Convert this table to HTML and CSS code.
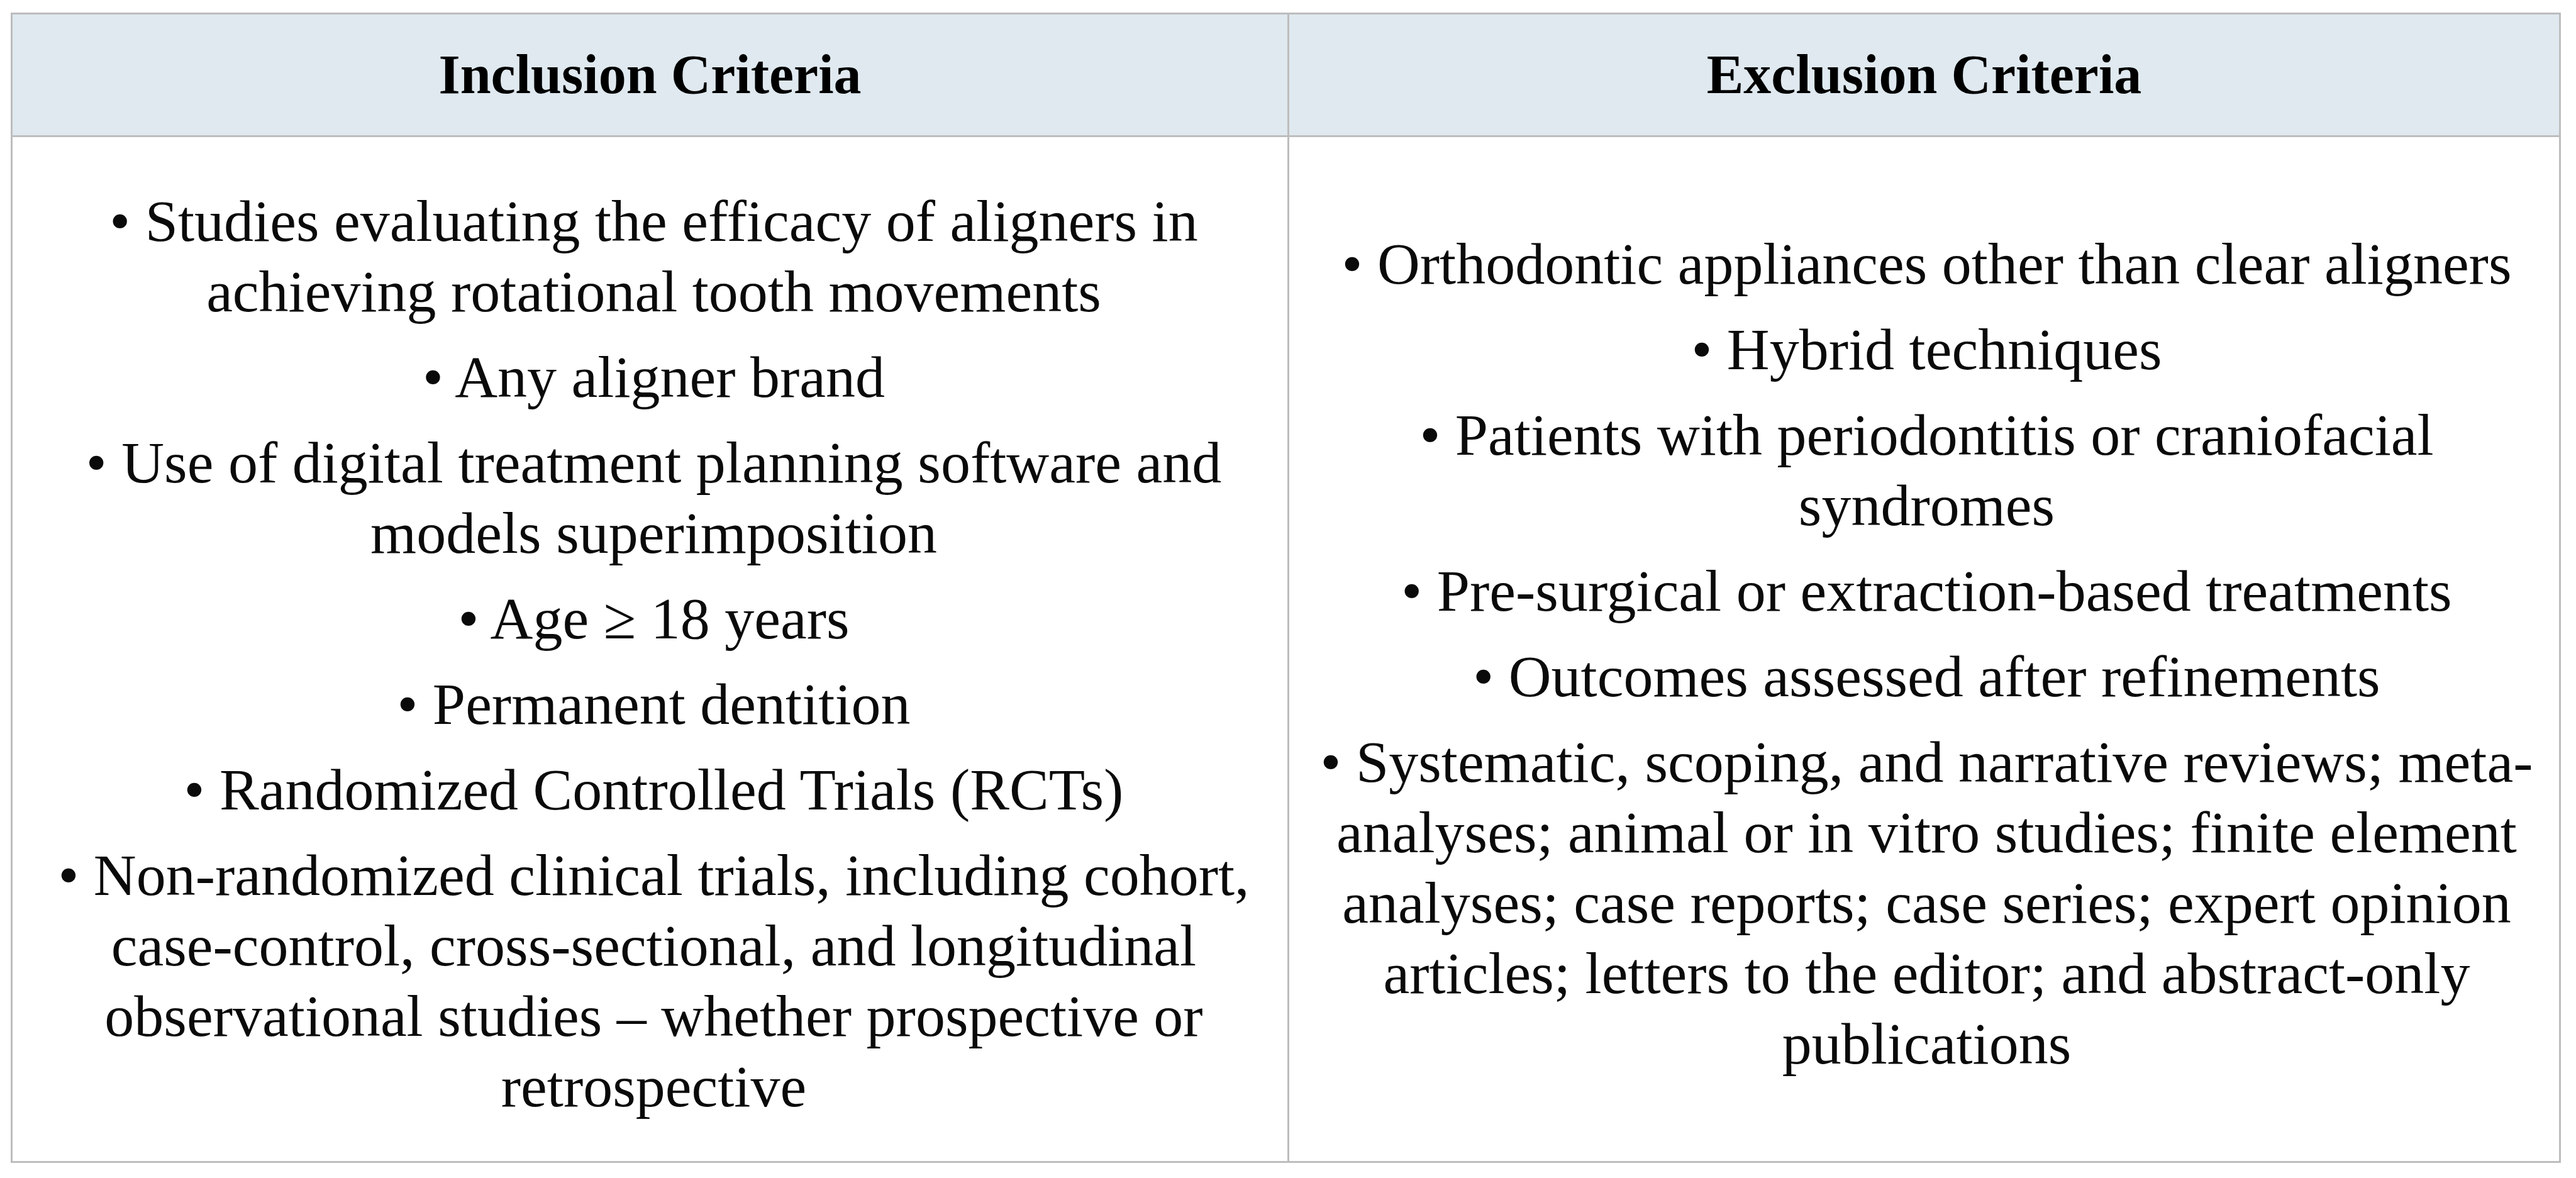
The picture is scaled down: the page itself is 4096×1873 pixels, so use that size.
FILE: index.html
```html
<!DOCTYPE html>
<html lang="en">
<head>
<meta charset="utf-8">
<title>Inclusion and Exclusion Criteria</title>
<link rel="stylesheet" href="styles.css">
</head>
<body>
<div class="wrap">
<table class="criteria">
  <colgroup>
    <col class="col-left">
    <col class="col-right">
  </colgroup>
  <thead>
    <tr>
      <th class="head">Inclusion Criteria</th>
      <th class="head">Exclusion Criteria</th>
    </tr>
  </thead>
  <tbody>
    <tr>
      <td class="cell cell-left">
        <p class="item">• Studies evaluating the efficacy of aligners in<br>achieving rotational tooth movements</p>
        <p class="item">• Any aligner brand</p>
        <p class="item">• Use of digital treatment planning software and<br>models superimposition</p>
        <p class="item">• Age ≥ 18 years</p>
        <p class="item">• Permanent dentition</p>
        <p class="item">• Randomized Controlled Trials (RCTs)</p>
        <p class="item">• Non-randomized clinical trials, including cohort,<br>case-control, cross-sectional, and longitudinal<br>observational studies – whether prospective or<br>retrospective</p>
      </td>
      <td class="cell cell-right">
        <p class="item">• Orthodontic appliances other than clear aligners</p>
        <p class="item">• Hybrid techniques</p>
        <p class="item">• Patients with periodontitis or craniofacial<br>syndromes</p>
        <p class="item">• Pre-surgical or extraction-based treatments</p>
        <p class="item">• Outcomes assessed after refinements</p>
        <p class="item">• Systematic, scoping, and narrative reviews; meta-<br>analyses; animal or in vitro studies; finite element<br>analyses; case reports; case series; expert opinion<br>articles; letters to the editor; and abstract-only<br>publications</p>
      </td>
    </tr>
  </tbody>
</table>
</div>
</body>
</html>
```

FILE: styles.css
```css
html, body {
  margin: 0;
  padding: 0;
  background: #ffffff;
}

body {
  font-family: "Liberation Serif", "Times New Roman", serif;
  color: #000000;
}

.wrap {
  padding: 20px 0 0 17px;
}

.criteria {
  border-collapse: collapse;
  table-layout: fixed;
  width: 4052px;
}

.col-left {
  width: 2030px;
}

.col-right {
  width: 2022px;
}

.head {
  height: 192px;
  background: #dfe9ef;
  border: 3px solid #bdbdbd;
  font-weight: bold;
  font-size: 88px;
  line-height: 1.15;
  text-align: center;
  vertical-align: middle;
  padding: 0;
}

.cell {
  height: 1628px;
  border: 3px solid #bdbdbd;
  text-align: center;
  vertical-align: middle;
  white-space: nowrap;
  font-size: 94px;
  line-height: 112px;
  color: #0a0a0a;
}

.cell-left {
  padding: 0 0 0 12px;
}

.cell-right {
  padding: 0 0 0 8px;
}

.item {
  margin: 0 0 24px 0;
}

.item:first-child {
  margin-top: 14px;
}

.item:last-child {
  margin-bottom: 0;
}
```
